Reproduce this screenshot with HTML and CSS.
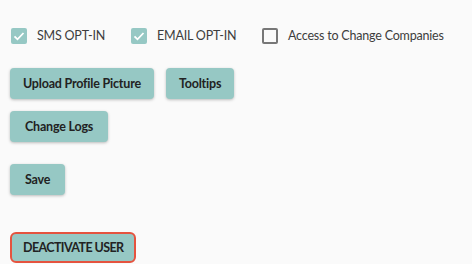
FILE: index.html
```html
<!DOCTYPE html>
<html lang="en">
<head>
  <meta charset="UTF-8" />
  <title>User Settings</title>
  <link rel="stylesheet" href="styles.css">
</head>
<body>
  <div class="options">
    <label class="check sms">
      <span class="box checked">
        <svg viewBox="0 0 16 16" width="16" height="16"><path d="M3.5 8.3l3 3 6-6.3" fill="none" stroke="#fff" stroke-width="1.8"/></svg>
      </span>
      SMS OPT-IN
    </label>
    <label class="check email">
      <span class="box checked">
        <svg viewBox="0 0 16 16" width="16" height="16"><path d="M3.5 8.3l3 3 6-6.3" fill="none" stroke="#fff" stroke-width="1.8"/></svg>
      </span>
      EMAIL OPT-IN
    </label>
    <label class="check">
      <span class="box"></span>
      Access to Change Companies
    </label>
  </div>

  <div class="actions">
    <div class="row">
      <button>Upload Profile Picture</button>
      <button>Tooltips</button>
    </div>
    <div class="row">
      <button class="wide">Change Logs</button>
    </div>
    <div class="row save">
      <button class="wide">Save</button>
    </div>
    <div class="row danger">
      <button class="deactivate">DEACTIVATE USER</button>
    </div>
  </div>
</body>
</html>
```

FILE: styles.css
```css
body {
  margin: 0;
  background: #fafafa;
  font-family: 'Lato', 'Noto Sans', sans-serif;
  color: #333;
}
.options {
  display: flex;
  padding: 28px 0 0 11px;
  height: 16px;
}
.check {
  display: flex;
  align-items: center;
  font-size: 12.5px;
  letter-spacing: -0.2px;
  color: #3d3d3d;
  line-height: 16px;
  white-space: nowrap;
}
.check.sms {
  width: 120px;
}
.check.email {
  width: 131px;
}
.box {
  width: 16px;
  height: 16px;
  box-sizing: border-box;
  border: 2px solid #777;
  border-radius: 2px;
  margin-right: 10px;
  flex: none;
}
.box.checked {
  background: #96c8c4;
  border: none;
}
.box svg {
  display: block;
}
.actions {
  padding: 24px 0 0 10px;
}
.row {
  display: flex;
  gap: 12px;
  margin-bottom: 12px;
}
.row.save {
  margin-top: 22px;
}
.row.danger {
  margin-top: 37px;
}
button {
  font-family: inherit;
  font-size: 12.5px;
  letter-spacing: -0.2px;
  font-weight: bold;
  color: #222;
  background: #96c8c4;
  border: none;
  border-radius: 4px;
  height: 31px;
  padding: 0 13px;
  box-shadow: 0 1px 3px rgba(0,0,0,0.25);
}
button.wide {
  padding: 0 15px;
}
.deactivate {
  border: 2px solid #e5533f;
  border-radius: 6px;
  padding: 0 11px;
  letter-spacing: -0.6px;
  box-shadow: none;
}
```
